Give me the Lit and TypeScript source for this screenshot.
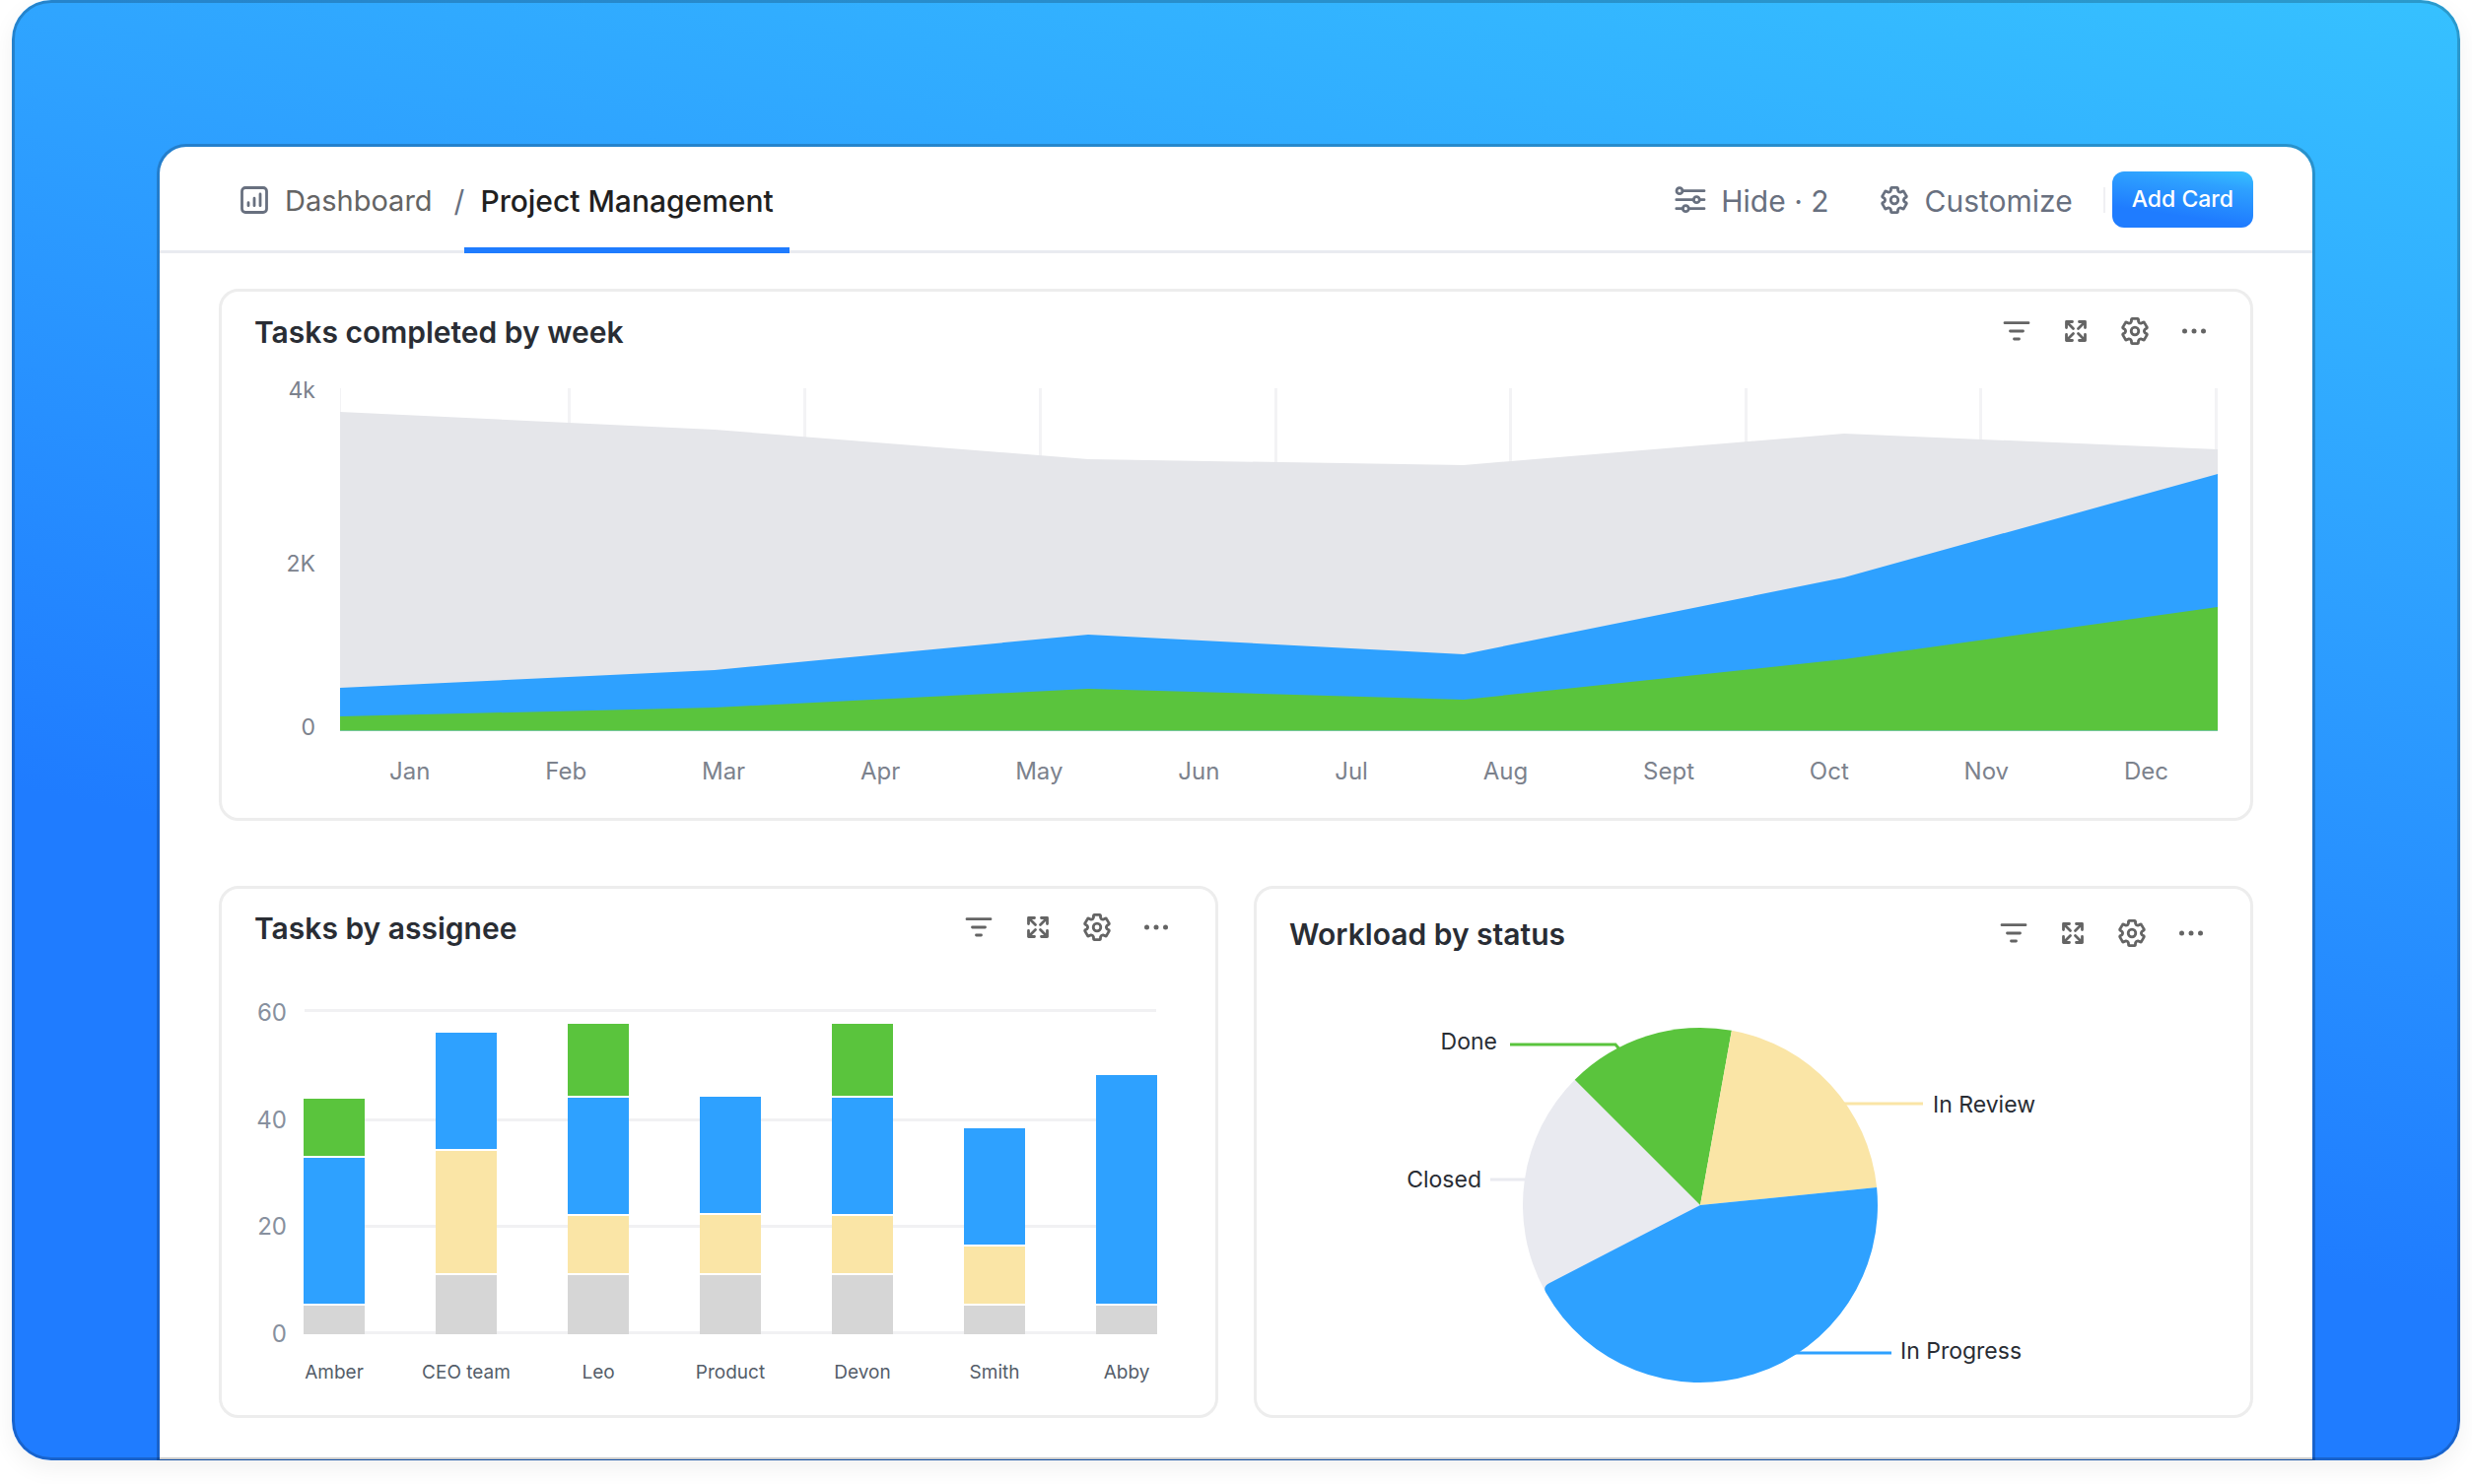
import { LitElement, html, svg, css } from "lit";
import { customElement, property } from "lit/decorators.js";

const BLUE = "#2ea1ff";
const GREEN = "#5ac43d";
const YELLOW = "#fae5a6";
const GRAY = "#d6d6d6";

/** Outline of a six-toothed gear centred in a 32-unit box. */
const gearPath = (outer: number, inner: number): string => {
  const at = (deg: number, r: number) => {
    const a = ((deg - 90) * Math.PI) / 180;
    return `${(16 + r * Math.cos(a)).toFixed(2)} ${(16 + r * Math.sin(a)).toFixed(2)}`;
  };
  let d = "";
  for (let k = 0; k < 6; k++) {
    const c = k * 60;
    d += `${k ? "L" : "M"}${at(c - 17, outer - 1)}Q${at(c - 16, outer + 0.4)} ${at(c - 11, outer)}`;
    d += `L${at(c + 11, outer)}Q${at(c + 16, outer + 0.4)} ${at(c + 17, outer - 1)}`;
    d += `L${at(c + 21, inner + 0.4)}Q${at(c + 30, inner - 1)} ${at(c + 39, inner + 0.4)}`;
  }
  return d + "Z";
};

const icons = {
  dashboard: svg`<rect x="3.5" y="3.5" width="25" height="25" rx="3.5"/><path d="M10 21.700v-3M16 21.700v-7.500M22 21.700V10"/>`,
  sliders: svg`<circle cx="5" cy="6.7" r="3"/><path d="M8 6.7h22M1.800 15.700h17.500M25.300 15.700h4.700M1.800 24.700h6.500M14.300 24.700h15.700"/><circle cx="22.300" cy="15.700" r="3"/><circle cx="11.300" cy="24.700" r="3"/>`,
  gear: svg`<path d=${gearPath(12.8, 9.8)}/><circle cx="16" cy="16" r="3.800"/>`,
  filter: svg`<path d="M4 7.700h24M9.500 16h13M13.500 24h5"/>`,
  expand: svg`<path d="M6.500 12.500V6.500H12.500M6.500 6.500l7 7M19.500 6.500h6V12.500M25.500 6.500l-7 7M6.500 19.500v6H12.500M6.500 25.500l7-7M19.500 25.500h6V19.500M25.500 25.500l-7-7"/>`,
  dots: svg`<g fill="currentColor" stroke="none"><circle cx="6.500" cy="16" r="2.500"/><circle cx="16" cy="16" r="2.500"/><circle cx="25.500" cy="16" r="2.500"/></g>`,
};
type IconName = keyof typeof icons;

const base = css`
  :host {
    box-sizing: border-box;
    font-family: Inter, "Liberation Sans", sans-serif;
  }
  *,
  *::before,
  *::after {
    box-sizing: border-box;
  }
`;

@customElement("ui-icon")
class UiIcon extends LitElement {
  @property() name: IconName = "gear";
  static styles = css`
    :host {
      display: block;
      flex: none;
      width: 32px;
      height: 32px;
    }
    .icon {
      display: block;
      width: 100%;
      height: 100%;
      fill: none;
      stroke: currentColor;
      stroke-width: 2.8;
      stroke-linecap: round;
      stroke-linejoin: round;
    }
  `;
  render() {
    return html`<svg class="icon" viewBox="0 0 32 32" aria-hidden="true">${icons[this.name]}</svg>`;
  }
}

@customElement("chart-card")
class ChartCard extends LitElement {
  @property() heading = "";
  static styles = [
    base,
    css`
      :host {
        display: flex;
        flex-direction: column;
        border: 3px solid #ededed;
        border-radius: 20px;
        background: #fff;
        min-width: 0;
      }
      .head {
        display: flex;
        align-items: center;
        justify-content: space-between;
        padding: var(--head-top, 20px) var(--head-right, 42px) 0 33px;
      }
      .title {
        margin: 0;
        font-size: 30px;
        line-height: 40px;
        font-weight: 600;
        color: #292d34;
      }
      .tools {
        display: flex;
        gap: 28px;
        padding-bottom: 2px;
      }
      .tool {
        padding: 0;
        border: 0;
        background: none;
        color: #646464;
        cursor: pointer;
      }
    `,
  ];
  render() {
    const tools: [IconName, string][] = [
      ["filter", "Filter"],
      ["expand", "Expand"],
      ["gear", "Settings"],
      ["dots", "More"],
    ];
    return html`
      <header class="head">
        <h2 class="title">${this.heading}</h2>
        <div class="tools">
          ${tools.map(
            ([icon, label]) => html`<button class="tool" type="button" aria-label=${label}><ui-icon name=${icon}></ui-icon></button>`,
          )}
        </div>
      </header>
      <slot></slot>
    `;
  }
}

@customElement("area-chart")
class AreaChart extends LitElement {
  static styles = [
    base,
    css`
      :host {
        display: grid;
        grid-template-columns: 120px 1fr;
        padding: 37px 33px 36px 0;
      }
      .axis {
        display: grid;
        grid-template-rows: 176px 166px 24px;
        padding-right: 25px;
        margin: -10px 0 -8px;
        text-align: right;
        font-size: 23px;
        line-height: 24px;
        color: #7c828d;
      }
      .plot {
        display: block;
        width: 100%;
        height: 348px;
      }
      .months {
        grid-column: 2;
        display: flex;
        justify-content: space-between;
        margin: 0;
        padding: 29px 50px 0 50px;
        list-style: none;
        font-size: 24px;
        line-height: 24px;
        color: #7c828d;
      }
    `,
  ];
  render() {
    const months = ["Jan", "Feb", "Mar", "Apr", "May", "Jun", "Jul", "Aug", "Sept", "Oct", "Nov", "Dec"];
    const grid = [0, 233, 472, 711, 950, 1188, 1427, 1665, 1904];
    const xs = [0, 380, 759, 1140, 1526, 1905];
    const series: [string, number[]][] = [
      ["#e5e6ea", [24, 42, 72, 78, 46, 62]],
      [BLUE, [304, 286, 250, 270, 192, 87]],
      [GREEN, [333, 324, 305, 316, 275, 222]],
    ];
    return html`
      <div class="axis"><span>4k</span><span>2K</span><span>0</span></div>
      <svg class="plot" viewBox="0 0 1905 348" preserveAspectRatio="none" role="img" aria-label="Tasks completed by week">
        ${grid.map((x) => svg`<rect x=${x - 2} y="0" width="3" height="346" fill="#f3f3f5"/>`)}
        ${series.map(
          ([fill, ys]) => svg`<path fill=${fill} d=${`M0 347.500L${xs.map((x, i) => `${x} ${ys[i]}`).join("L")}V347.500Z`}/>`,
        )}
      </svg>
      <ul class="months">${months.map((m) => html`<li>${m}</li>`)}</ul>
    `;
  }
}

@customElement("bar-chart")
class BarChart extends LitElement {
  static styles = [
    base,
    css`
      :host {
        display: grid;
        grid-template-columns: 83px 1fr;
        padding: 62px 59px 0 0;
      }
      .axis {
        display: flex;
        flex-direction: column;
        justify-content: space-between;
        margin: -8px 0 -12px;
        padding-right: 17px;
        text-align: right;
        font-size: 24px;
        line-height: 24px;
        color: #87909e;
      }
      .plot {
        display: grid;
        height: 330px;
      }
      .grid,
      .bars {
        grid-area: 1 / 1;
      }
      .grid {
        display: block;
        width: 100%;
        height: 100%;
      }
      .bars {
        z-index: 1;
        display: flex;
        justify-content: space-between;
        align-items: flex-end;
      }
      .bar {
        display: flex;
        flex-direction: column;
        gap: 2px;
        width: 62px;
        background: #fff;
      }
      .names {
        grid-column: 2;
        display: flex;
        justify-content: space-between;
        margin: 0;
        padding: 27px 0 0;
        list-style: none;
        font-size: 19px;
        line-height: 24px;
        color: #545d69;
      }
      .name {
        display: flex;
        justify-content: center;
        width: 62px;
        white-space: nowrap;
      }
    `,
  ];
  render() {
    const bars: [string, [string, number][]][] = [
      ["Amber", [[GREEN, 58], [BLUE, 148], [GRAY, 29]]],
      ["CEO team", [[BLUE, 118], [YELLOW, 124], [GRAY, 60]]],
      ["Leo", [[GREEN, 73], [BLUE, 118], [YELLOW, 58], [GRAY, 60]]],
      ["Product", [[BLUE, 118], [YELLOW, 59], [GRAY, 60]]],
      ["Devon", [[GREEN, 73], [BLUE, 118], [YELLOW, 58], [GRAY, 60]]],
      ["Smith", [[BLUE, 118], [YELLOW, 58], [GRAY, 29]]],
      ["Abby", [[BLUE, 232], [GRAY, 29]]],
    ];
    return html`
      <div class="axis"><span>60</span><span>40</span><span>20</span><span>0</span></div>
      <div class="plot">
        <svg class="grid" viewBox="0 0 866 330" preserveAspectRatio="none" aria-hidden="true">
          ${[0, 111, 219, 327].map((y) => svg`<rect x="1" y=${y} width="864" height="3" fill="#f1f1f3"/>`)}
        </svg>
        <div class="bars">
          ${bars.map(
            ([, parts]) => html`<div class="bar">
              ${parts.map(([color, h]) => html`<div style="height:${h}px;background:${color}"></div>`)}
            </div>`,
          )}
        </div>
      </div>
      <ul class="names">${bars.map(([name]) => html`<li class="name">${name}</li>`)}</ul>
    `;
  }
}

@customElement("pie-chart")
class PieChart extends LitElement {
  static styles = [
    base,
    css`
      :host {
        display: block;
        padding-top: 21px;
      }
      .pie {
        display: block;
        width: 100%;
      }
      .label {
        font-size: 23px;
        fill: #292d34;
      }
      .lead {
        fill: none;
        stroke-width: 3;
      }
    `,
  ];
  render() {
    const cx = 450, cy = 234, r = 180;
    const pt = (deg: number, rad = r) => {
      const a = ((deg - 90) * Math.PI) / 180;
      return `${(cx + rad * Math.cos(a)).toFixed(1)} ${(cy + rad * Math.sin(a)).toFixed(1)}`;
    };
    const slice = (from: number, to: number) =>
      `M${cx} ${cy}L${pt(from)}A${r} ${r} 0 ${to - from > 180 ? 1 : 0} 1 ${pt(to)}Z`;
    const progress = `M${cx} ${cy}L${pt(84.3)}A${r} ${r} 0 0 1 ${pt(240.5)}Q${pt(242.8)} ${pt(242.7, 172)}Z`;
    return html`
      <svg class="pie" viewBox="0 0 1008 440" role="img" aria-label="Workload by status">
        <path class="lead" stroke=${GREEN} d="M257 71H364L370 78"/>
        <path class="lead" stroke=${YELLOW} d="M590 131H676"/>
        <path class="lead" stroke="#e9eaf0" d="M237 208H280"/>
        <path class="lead" stroke=${BLUE} d="M545 384H644"/>
        <path fill="#e9eaf0" d=${slice(241.5, 315)}/>
        <path fill=${GREEN} d=${slice(315, 370.2)}/>
        <path fill=${YELLOW} d=${slice(10.2, 84.3)}/>
        <path fill=${BLUE} d=${progress}/>
        <text class="label" x="244" y="76" text-anchor="end">Done</text>
        <text class="label" x="686" y="140">In Review</text>
        <text class="label" x="228" y="216" text-anchor="end">Closed</text>
        <text class="label" x="653" y="390">In Progress</text>
      </svg>
    `;
  }
}

@customElement("app-root")
class AppRoot extends LitElement {
  static styles = [
    base,
    css`
      :host {
        display: block;
        padding: 0 12px 24px;
        background: #fff;
        overflow: hidden;
      }
      .frame {
        position: relative;
        display: flow-root;
        padding: 146px 147px 0;
        border-radius: 40px;
        overflow: hidden;
        background: linear-gradient(192deg, #36c1ff 0%, #2ea1ff 30%, #1f7cff 66%, #1f7cff 100%);
      }
      .shadow {
        border-radius: 40px;
        box-shadow: 0 8px 24px rgba(0, 0, 0, 0.06);
      }
      .frame::after {
        content: "";
        position: absolute;
        inset: 0;
        border: 3px solid rgba(0, 0, 0, 0.2);
        border-radius: 40px;
        pointer-events: none;
      }
      .panel {
        border: 3px solid rgba(0, 0, 0, 0.2);
        border-bottom-width: 1px;
        border-radius: 30px 30px 0 0;
        background: #fff padding-box;
      }
      .bar {
        display: flex;
        justify-content: space-between;
        height: 108px;
        padding: 0 60px 0 80px;
        border-bottom: 3px solid #e9ebf0;
        font-size: 30px;
        line-height: 36px;
      }
      .text {
        padding-top: 2px;
      }
      .crumbs {
        display: flex;
        align-items: stretch;
        padding-top: 3px;
      }
      .crumb {
        display: flex;
        align-items: center;
        gap: 15px;
        color: #646464;
        font-size: 29px;
        text-decoration: none;
      }
      .crumb ui-icon,
      .action ui-icon {
        color: #68707f;
      }
      .slash {
        align-self: center;
        padding: 2px 0 0 22px;
        color: #68707f;
      }
      .tab {
        display: flex;
        align-items: center;
        margin-bottom: -3px;
        padding: 3px 16px 0;
        border-bottom: 6px solid #1f7cff;
        color: #202020;
        font-weight: 500;
        text-decoration: none;
      }
      .actions {
        display: flex;
        align-items: center;
        padding-top: 2px;
      }
      .action {
        display: flex;
        align-items: center;
        gap: 15px;
        margin-right: 50px;
        padding: 0;
        border: 0;
        background: none;
        color: #68707f;
        font: inherit;
        cursor: pointer;
      }
      .action:nth-of-type(2) {
        margin-right: 31px;
      }
      .rule {
        width: 2px;
        height: 26px;
        margin-right: 7px;
        background: #f0f0f3;
      }
      .add {
        height: 57px;
        padding: 0 20px 2px;
        border: 0;
        border-radius: 12px;
        background: linear-gradient(188deg, #36c1ff 0%, #2ea1ff 25%, #1f7cff 72%);
        color: #fff;
        font: 500 23px / 28px Inter, "Liberation Sans", sans-serif;
        cursor: pointer;
      }
      .cards {
        display: grid;
        grid-template-columns: 1fr 1fr;
        grid-auto-rows: 540px;
        gap: 66px 36px;
        padding: 36px 60px 42px;
      }
      .wide {
        grid-column: 1 / -1;
        --head-top: 21px;
        --head-right: 41px;
      }
      .right {
        --head-top: 26px;
        --head-right: 44px;
      }
      .left {
        --head-right: 44px;
      }
    `,
  ];
  render() {
    return html`
      <div class="shadow">
        <div class="frame">
          <main class="panel">
            <header class="bar">
              <nav class="crumbs" aria-label="Breadcrumb">
                <a class="crumb" href="#dashboard"><ui-icon name="dashboard"></ui-icon><span class="text">Dashboard</span></a>
                <span class="slash">/</span>
                <a class="tab" href="#project" aria-current="page"><span class="text">Project Management</span></a>
              </nav>
              <div class="actions">
                <button class="action" type="button"><ui-icon name="sliders"></ui-icon><span class="text">Hide · 2</span></button>
                <button class="action" type="button"><ui-icon name="gear"></ui-icon><span class="text">Customize</span></button>
                <span class="rule"></span>
                <button class="add" type="button">Add Card</button>
              </div>
            </header>
            <section class="cards">
              <chart-card class="wide" heading="Tasks completed by week"><area-chart></area-chart></chart-card>
              <chart-card class="left" heading="Tasks by assignee"><bar-chart></bar-chart></chart-card>
              <chart-card class="right" heading="Workload by status"><pie-chart></pie-chart></chart-card>
            </section>
          </main>
        </div>
      </div>
    `;
  }
}
